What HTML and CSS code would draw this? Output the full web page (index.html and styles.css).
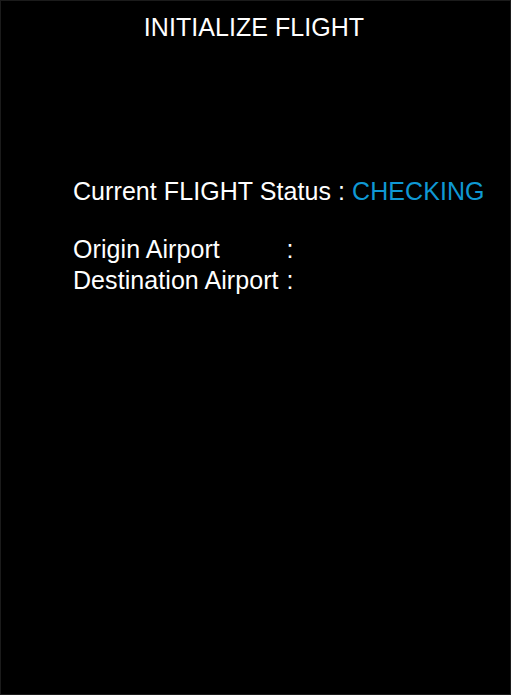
FILE: index.html
```html
<!DOCTYPE html>
<html>
<head>
<meta charset="utf-8">
<link rel="stylesheet" href="styles.css">
</head>
<body>
<div class="screen">
  <h1 class="title">INITIALIZE FLIGHT</h1>
  <div class="info">
    <p class="status">Current FLIGHT Status : <span class="status-value">CHECKING</span></p>
    <div class="airports">
      <span class="label">Origin Airport</span><span class="colon">:</span><span class="value"></span>
      <span class="label">Destination Airport</span><span class="colon">:</span><span class="value"></span>
    </div>
  </div>
</div>
</body>
</html>
```
FILE: styles.css
```css
html, body {
  margin: 0;
  padding: 0;
  background: #000;
}
body {
  font-family: "Liberation Sans", Arial, sans-serif;
  color: #fff;
}
.screen {
  box-sizing: border-box;
  width: 511px;
  height: 695px;
  border: 1px solid #1b1b1b;
  background: #000;
  padding-top: 11px;
}
.title {
  margin: 0;
  font-size: 25px;
  font-weight: normal;
  line-height: 31px;
  text-align: center;
  padding-right: 3px;
  letter-spacing: 0.05px;
}
.info {
  padding-left: 72px;
  padding-top: 133px;
  font-size: 25px;
  line-height: 31px;
  letter-spacing: 0.07px;
}
.status {
  margin: 0 0 27px 0;
}
.status-value {
  color: #0f98d4;
}
.airports {
  display: grid;
  grid-template-columns: max-content max-content 1fr;
  column-gap: 8px;
}
```
